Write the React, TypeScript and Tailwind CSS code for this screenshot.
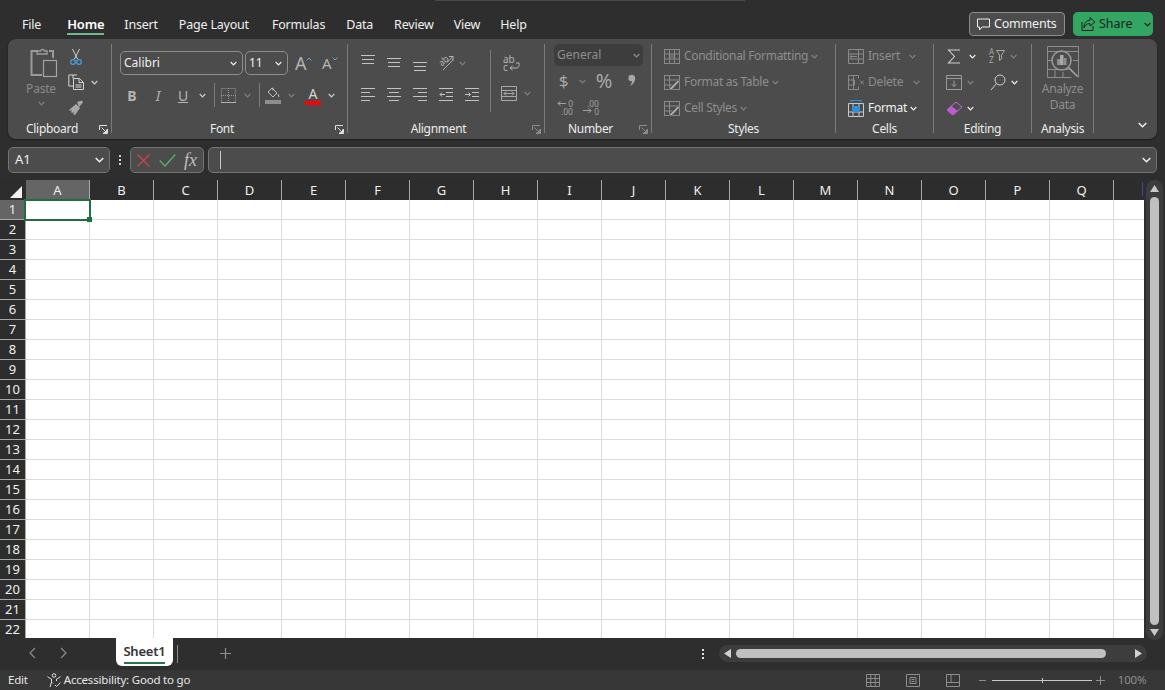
import type { ReactNode } from "react";

const DIM = "#8f8f8f";
const LITE = "#d0d0d0";

const tabs = [
  { name: "File", cls: "ml-[22px]" },
  { name: "Home", cls: "ml-[26px] text-[13px] font-semibold text-white" },
  { name: "Insert", cls: "ml-[20px]" },
  { name: "Page Layout", cls: "ml-[21px]" },
  { name: "Formulas", cls: "ml-[23px]" },
  { name: "Data", cls: "ml-[21px]" },
  { name: "Review", cls: "ml-[21px]" },
  { name: "View", cls: "ml-[20px]" },
  { name: "Help", cls: "ml-[20px]" },
];

const columns = ["A", "B", "C", "D", "E", "F", "G", "H", "I", "J", "K", "L", "M", "N", "O", "P", "Q"];
const rows = Array.from({ length: 22 }, (_, i) => i + 1);

function Chev({ color = LITE, className = "" }: { color?: string; className?: string }) {
  return (
    <svg width="7" height="5" viewBox="0 0 7 5" className={`shrink-0 ${className}`}>
      <path d="M.7 1 3.500 3.800 6.300 1" fill="none" stroke={color} strokeWidth="1.200" />
    </svg>
  );
}

function Launcher({ dim }: { dim?: boolean }) {
  const c = dim ? "#8c8c8c" : "#e0e0e0";
  return (
    <div className="w-[15px] flex items-center justify-center">
      <svg width="9" height="9" viewBox="0 0 9 9">
        <path d="M.5 5V.5h7.500M8.500 4v4.500H4M2.500 2.500l5 5M4.500 7.500h3v-3" fill="none" stroke={c} strokeWidth="1" />
      </svg>
    </div>
  );
}

function Group({ w, label, launcher, children }: { w: string; label: string; launcher?: "on" | "dim"; children: ReactNode }) {
  return (
    <div className={`${w} h-[89px] my-[5px] border-r border-[#7a7a7a] flex flex-col shrink-0`}>
      <div className="h-[77px] shrink-0">{children}</div>
      <div className="h-[16px] shrink-0 flex text-[12px] leading-[16px] tracking-[-0.3px] text-[#ececec]">
        <div className="flex-1 text-center">{label}</div>
        {launcher && <Launcher dim={launcher === "dim"} />}
      </div>
    </div>
  );
}

function Row3({ children }: { children: ReactNode }) {
  return <div className="h-[26px] flex items-center">{children}</div>;
}

function Lines({ pos, dim }: { pos: "top" | "mid" | "bot"; dim?: boolean }) {
  const y = pos === "top" ? [0.5, 4.5, 8.5] : pos === "mid" ? [3.5, 7.5, 11.5] : [7.5, 11.5, 15.5];
  const x = [[0, 14], [1, 13], [1, 13]];
  return (
    <svg width="14" height="16" viewBox="0 0 14 16" className="shrink-0">
      {y.map((v, i) => (
        <path key={i} d={`M${x[i][0]} ${v}H${x[i][1]}`} stroke={dim ? DIM : "#c4c4c4"} />
      ))}
    </svg>
  );
}

function Para({ kind }: { kind: "l" | "c" | "r" | "out" | "in" }) {
  const s = "#c4c4c4";
  return (
    <svg width="14" height="13" viewBox="0 0 14 13" className="shrink-0">
      {kind === "l" && <path d="M0 .5h14M0 4.500h9M0 8.500h14M0 12.500h9" stroke={s} />}
      {kind === "c" && <path d="M0 .5h14M2 4.500h10M0 8.500h14M2 12.500h10" stroke={s} />}
      {kind === "r" && <path d="M0 .5h14M5 4.500h9M0 8.500h14M5 12.500h9" stroke={s} />}
      {kind === "out" && <path d="M0 .5h14M7 4.500h7M7 8.500h7M0 12.500h14M6 6.500H1M3 4.500l-2 2 2 2" stroke={s} fill="none" />}
      {kind === "in" && <path d="M0 .5h14M7 4.500h7M7 8.500h7M0 12.500h14M0 6.500h5M3.500 4.500l2 2-2 2" stroke={s} fill="none" />}
    </svg>
  );
}

function TableIcon() {
  const c = "#8a8a8a";
  return (
    <svg width="16" height="15" viewBox="0 0 16 15" className="shrink-0">
      <rect x=".5" y=".5" width="15" height="14" fill="none" stroke={c} />
      <path d="M.5 5h15M.5 10h15M5.500 0v15M10.500 0v15" stroke={c} />
      <rect x="6" y="5.500" width="4" height="4" fill="#6a6a6a" />
    </svg>
  );
}

function BrushTable() {
  return (
    <svg width="16" height="15" viewBox="0 0 16 15" className="shrink-0">
      <rect x=".5" y=".5" width="15" height="14" fill="none" stroke="#8a8a8a" />
      <path d="M.5 5h15M.5 10h8M5.500 0v15" stroke="#8a8a8a" />
      <path d="M5 14l9-9 1.500 1.500-8 8.500z" fill="#b0b0b0" stroke="#4c4c4c" strokeWidth=".6" />
    </svg>
  );
}

function ClipboardGroup() {
  return (
    <Group w="w-[104px]" label="Clipboard" launcher="on">
      <div className="flex -mt-px">
        <div className="ml-[14px] w-[38px] flex flex-col items-center pt-[5px]">
          <svg width="28" height="30" viewBox="0 0 28 30" className="ml-[5px]">
            <path d="M8 3H1.500v24H12M19 3h4v7" fill="none" stroke="#9a9a9a" strokeWidth="2" />
            <path d="M7 5V3h3.500C11 1 14 1 14.500 3H17v3H7z" fill="none" stroke="#9a9a9a" strokeWidth="1.400" />
            <rect x="13.500" y="12.500" width="13" height="16" fill="none" stroke="#a4a4a4" strokeWidth="1.200" />
          </svg>
          <div className="mt-[3px] text-[12px] leading-[16px] tracking-[-0.2px] text-[#8a8a8a]">Paste</div>
          <Chev color="#808080" className="mt-[4px]" />
        </div>
        <div className="ml-[8px] flex flex-col">
          <Row3>
            <svg width="16" height="17" viewBox="0 0 16 17" className="shrink-0">
              <path d="M4.500 1l5 10M11.500 1l-5 10" stroke="#d0d0d0" fill="none" />
              <circle cx="5" cy="14" r="2.300" fill="none" stroke="#4a9fe0" strokeWidth="1.200" />
              <circle cx="11" cy="14" r="2.300" fill="none" stroke="#4a9fe0" strokeWidth="1.200" />
            </svg>
          </Row3>
          <Row3>
            <svg width="16" height="16" viewBox="0 0 16 16" className="shrink-0">
              <path d="M5 1H.8v11H5M5 4.500V1h4" fill="none" stroke="#d4d4d4" />
              <path d="M5.500 4.500h6l4 4v7h-10zM11 4.500v4h4.500M7.500 11h6M7.500 13h6" fill="#4c4c4c" stroke="#d4d4d4" />
            </svg>
            <Chev className="ml-[7px]" />
          </Row3>
          <Row3>
            <svg width="16" height="16" viewBox="0 0 16 16" className="shrink-0">
              <path d="M9 2l5-1.500 1 2L11 7zM1 10l7-6 4 4-5 7-2-1 1-2-2 1-1-1 1-2-2 1z" fill="#a8a8a8" />
            </svg>
          </Row3>
        </div>
      </div>
    </Group>
  );
}

function Combo({ w, text }: { w: string; text: string }) {
  return (
    <div className={`${w} h-[24px] rounded-[5px] border border-[#8e8e8e] flex items-center justify-between pl-[3px] pr-[5px] text-[12px] text-[#f0f0f0]`}>
      <span>{text}</span>
      <Chev color="#f0f0f0" />
    </div>
  );
}

function FontGroup() {
  return (
    <Group w="w-[236px]" label="Font" launcher="on">
      <div className="flex items-center mt-[7px] ml-[8px]">
        <Combo w="w-[123px]" text="Calibri" />
        <div className="ml-[2px]"><Combo w="w-[43px]" text="11" /></div>
        <div className="ml-[7px] w-[17px] h-[24px] flex items-start">
          <span className="text-[18px] leading-[24px] text-[#b4b4b4]">A</span>
          <svg width="6" height="4" viewBox="0 0 6 4" className="mt-[6px] -ml-[1px] shrink-0"><path d="M.5 3.500 3 1l2.500 2.500" fill="none" stroke="#5aa9e6" /></svg>
        </div>
        <div className="ml-[10px] w-[17px] h-[24px] flex items-start">
          <span className="text-[15px] leading-[24px] text-[#b4b4b4]">A</span>
          <svg width="6" height="4" viewBox="0 0 6 4" className="mt-[6px] shrink-0"><path d="M.5.500 3 3 5.500.5" fill="none" stroke="#5aa9e6" /></svg>
        </div>
      </div>
      <div className="flex items-center h-[24px] mt-[8px]">
        <span className="ml-[14px] w-[12px] text-center text-[14px] font-bold text-[#b4b4b4]">B</span>
        <span className="ml-[14px] w-[12px] text-center text-[14px] italic text-[#b4b4b4]">I</span>
        <span className="ml-[13px] w-[12px] text-center text-[14px] underline text-[#b4b4b4]">U</span>
        <Chev className="ml-[10px]" />
        <div className="ml-[8px] w-px h-[24px] bg-[#7a7a7a]" />
        <svg width="15" height="15" viewBox="0 0 15 15" className="ml-[6px] shrink-0">
          <path d="M.5.500h14v14H.5zM7.500 0v15M0 7.500h15" fill="none" stroke="#9a9a9a" strokeDasharray="1 1" />
          <path d="M0 14.500h15" stroke="#b0b0b0" />
        </svg>
        <Chev color="#808080" className="ml-[8px]" />
        <div className="ml-[8px] w-px h-[24px] bg-[#7a7a7a]" />
        <svg width="16" height="17" viewBox="0 0 16 17" className="ml-[5px] shrink-0">
          <path d="M7 1l5 5-4 4-5-5zM8 .5v3M13 7l1 3" fill="none" stroke="#c0c0c0" />
          <rect x="0" y="13" width="16" height="4" fill="#8e8e8e" />
        </svg>
        <Chev color="#808080" className="ml-[7px]" />
        <div className="ml-[10px] w-[16px] flex flex-col items-center">
          <span className="text-[14px] leading-[15px] text-[#d4d4d4]">A</span>
          <div className="w-[16px] h-[4px] bg-[#ff0000]" />
        </div>
        <Chev className="ml-[7px]" />
      </div>
    </Group>
  );
}

function AlignmentGroup() {
  return (
    <Group w="w-[197px]" label="Alignment" launcher="dim">
      <div className="flex">
        <div className="w-[142px] pt-[11px]">
          <div className="flex items-center h-[16px]">
            <div className="ml-[13px]"><Lines pos="top" /></div>
            <div className="ml-[12px]"><Lines pos="mid" /></div>
            <div className="ml-[12px]"><Lines pos="bot" /></div>
            <div className="ml-[11px] w-[16px] h-[16px] relative shrink-0">
              <span className="absolute left-0 top-0 -rotate-45 text-[9px] leading-[11px] text-[#b4b4b4]">ab</span>
              <svg width="16" height="16" viewBox="0 0 16 16" className="absolute left-0 top-0">
                <path d="M5 15 15 5M11 1.500h4v4M15 1.500 9 7.500" fill="none" stroke="#b4b4b4" />
              </svg>
            </div>
            <Chev color="#808080" className="ml-[5px]" />
          </div>
          <div className="flex items-center mt-[17px]">
            <div className="ml-[13px]"><Para kind="l" /></div>
            <div className="ml-[12px]"><Para kind="c" /></div>
            <div className="ml-[12px]"><Para kind="r" /></div>
            <div className="ml-[12px]"><Para kind="out" /></div>
            <div className="ml-[12px]"><Para kind="in" /></div>
          </div>
        </div>
        <div className="mt-[6px] w-px h-[62px] bg-[#7a7a7a]" />
        <div className="flex flex-col pt-[11px]">
          <div className="ml-[12px] w-[17px] h-[16px] relative text-[10px] leading-[8px] text-[#b4b4b4] whitespace-pre-line">
            {"ab\nc"}
            <svg width="17" height="16" viewBox="0 0 17 16" className="absolute left-0 top-0">
              <path d="M13 8h3c.5 4-1 5-2 5H7M9.500 11 7 13l2.500 2" fill="none" stroke="#b4b4b4" />
            </svg>
          </div>
          <div className="flex items-center mt-[15px] ml-[10px]">
            <svg width="16" height="15" viewBox="0 0 16 15" className="shrink-0">
              <path d="M.5.500h15v14H.5zM.5 4.500h15M.5 10.500h15M3 7.500h10M5 5.500l-2 2 2 2M11 5.500l2 2-2 2" fill="none" stroke="#a8a8a8" />
            </svg>
            <Chev color="#808080" className="ml-[7px]" />
          </div>
        </div>
      </div>
    </Group>
  );
}

function NumberGroup() {
  const tiny = "text-[8.500px] leading-[8px] text-[#a0a0a0] text-right whitespace-pre-line";
  return (
    <Group w="w-[107px]" label="Number" launcher="dim">
      <div className="ml-[9px] w-[89px] h-[22px] bg-[#3d3d3d] rounded-[5px] flex items-center justify-between pl-[3px] pr-[3px] text-[12px] text-[#8e8e8e]">
        <span>General</span>
        <Chev color="#8e8e8e" />
      </div>
      <div className="flex items-center h-[24px] mt-[3px]">
        <span className="ml-[13px] w-[11px] text-center text-[17px] leading-[24px] text-[#a8a8a8]">$</span>
        <Chev color="#808080" className="ml-[10px]" />
        <span className="ml-[8px] w-[20px] text-center text-[20px] leading-[24px] text-[#a8a8a8]">%</span>
        <svg width="8" height="14" viewBox="0 0 8 14" className="ml-[14px] shrink-0">
          <path d="M1.500 1.500C5-.5 8 2 7 6c-.5 3-3 5-5 6 1-2 2-3 2-5-2 .5-4-.5-3.500-3 .1-1 .3-2 .5-2.500z" fill="#a8a8a8" />
        </svg>
      </div>
      <div className="flex items-center mt-[7px]">
        <div className={`ml-[12px] w-[16px] h-[14px] relative shrink-0 ${tiny}`}>
          {"0\n.00"}
          <svg width="9" height="7" viewBox="0 0 9 7" className="absolute left-0 top-0">
            <path d="M9 3.500H1M3.500 1 1 3.500 3.500 6" fill="none" stroke="#a0a0a0" />
          </svg>
        </div>
        <div className={`ml-[10px] w-[16px] h-[14px] relative shrink-0 ${tiny}`}>
          {".00\n0"}
          <svg width="9" height="7" viewBox="0 0 9 7" className="absolute left-0 top-[7px]">
            <path d="M0 3.500h8M5.500 1 8 3.500 5.500 6" fill="none" stroke="#a0a0a0" />
          </svg>
        </div>
      </div>
    </Group>
  );
}

function StyleRow({ icon, text }: { icon: ReactNode; text: string }) {
  return (
    <Row3>
      <div className="ml-[12px] flex items-center">{icon}</div>
      <span className="ml-[4px] text-[12px] text-[#8e8e8e] tracking-[-0.3px]">{text}</span>
      <Chev color="#808080" className="ml-[3px]" />
    </Row3>
  );
}

function CellsGroup() {
  return (
    <Group w="w-[98px]" label="Cells">
      <div className="-mt-px">
        <Row3>
          <svg width="16" height="15" viewBox="0 0 16 15" className="ml-[12px] shrink-0">
            <path d="M.5.500h15v14H.5zM.5 5h15M.5 10h15M10.500 0v15M9 7.500H2M4 5.500l-2 2 2 2" fill="none" stroke="#8a8a8a" />
          </svg>
          <span className="ml-[4px] w-[38px] text-[12px] tracking-[-0.2px] text-[#8e8e8e]">Insert</span>
          <Chev color="#808080" className="ml-[3px]" />
        </Row3>
        <Row3>
          <svg width="16" height="15" viewBox="0 0 16 15" className="ml-[12px] shrink-0">
            <path d="M.5.500h10v3M.5.500v14h10v-3M.5 5h6v5h-6M5.500 0v15M12 5.500l4 4M16 5.500l-4 4" fill="none" stroke="#8a8a8a" />
          </svg>
          <span className="ml-[4px] w-[42px] text-[12px] tracking-[-0.2px] text-[#8e8e8e]">Delete</span>
          <Chev color="#808080" className="ml-[3px]" />
        </Row3>
        <Row3>
          <svg width="16" height="17" viewBox="0 0 16 17" className="ml-[12px] shrink-0">
            <path d="M.5 3.500h15v13H.5zM.5 12h15M5 3.500v13M11 3.500v13" fill="none" stroke="#c8c8c8" />
            <rect x="4" y="6" width="8" height="6" fill="#2f8fdb" />
            <path d="M3 .500h10M3 0v2M13 0v2" stroke="#2f8fdb" fill="none" />
          </svg>
          <span className="ml-[4px] text-[12px] tracking-[-0.3px] text-[#f0f0f0]">Format</span>
          <Chev color="#f0f0f0" className="ml-[3px]" />
        </Row3>
      </div>
    </Group>
  );
}

function EditingGroup() {
  return (
    <Group w="w-[98px]" label="Editing">
      <div className="-mt-px">
        <Row3>
          <svg width="14" height="15" viewBox="0 0 14 15" className="ml-[13px] shrink-0">
            <path d="M13 1H1.500l6 6.500-6 6.500H13" fill="none" stroke="#d0d0d0" strokeWidth="1.100" />
          </svg>
          <Chev color="#f0f0f0" className="ml-[8px]" />
          <div className="ml-[13px] w-[16px] h-[16px] flex shrink-0">
            <div className="w-[7px] text-[8px] leading-[8px] text-[#a8a8a8] whitespace-pre-line">{"A\nZ"}</div>
            <svg width="9" height="11" viewBox="0 0 9 11" className="mt-[2px]">
              <path d="M.5.500h8L5.500 5v4L3.500 10.500V5z" fill="none" stroke="#a8a8a8" />
            </svg>
          </div>
          <Chev color="#808080" className="ml-[5px]" />
        </Row3>
        <Row3>
          <svg width="16" height="15" viewBox="0 0 16 15" className="ml-[12px] shrink-0">
            <path d="M.5.500h15v14H.5zM.5 3.500h15M8 5.500v6M5.500 9 8 11.500 10.500 9" fill="none" stroke="#9a9a9a" />
          </svg>
          <Chev color="#808080" className="ml-[5px]" />
          <svg width="16" height="17" viewBox="0 0 16 17" className="ml-[16px] shrink-0">
            <circle cx="10" cy="6" r="5" fill="none" stroke="#d0d0d0" />
            <path d="M6.500 9.500 1 16" stroke="#d0d0d0" />
          </svg>
          <Chev color="#f0f0f0" className="ml-[5px]" />
        </Row3>
        <Row3>
          <svg width="17" height="15" viewBox="0 0 17 15" className="ml-[12px] shrink-0">
            <path d="M1 9 10 1l6 5-9 8z" fill="#4c4c4c" stroke="#c76ad6" />
            <path d="M1 9l4-4 6 5-4 4z" fill="#c05ad0" stroke="#c05ad0" />
          </svg>
          <Chev color="#f0f0f0" className="ml-[4px]" />
        </Row3>
      </div>
    </Group>
  );
}

function AnalysisGroup() {
  return (
    <Group w="w-[62px]" label="Analysis">
      <div className="flex flex-col items-center pt-[2px]">
        <svg width="32" height="32" viewBox="0 0 32 32">
          <path d="M.5.500h31v31M.5.500v31h24M.5 5.500h31M.5 23.500h21M.5 14.500h6M26 14.500h5M8 24v7M16 26v5" fill="none" stroke="#8e8e8e" />
          <circle cx="14.500" cy="14.500" r="9.500" fill="#4c4c4c" stroke="#9a9a9a" strokeWidth="1.500" />
          <rect x="10" y="13" width="3" height="6" fill="#8e8e8e" />
          <rect x="13" y="9" width="3.500" height="10" fill="#a8a8a8" />
          <rect x="16.500" y="12" width="3" height="7" fill="#8e8e8e" />
          <path d="M21.500 21.500l9 9" stroke="#a8a8a8" strokeWidth="1.600" />
        </svg>
        <div className="mt-[3px] text-[12px] leading-[16px] tracking-[-0.3px] text-[#8e8e8e] text-center">Analyze<br />Data</div>
      </div>
    </Group>
  );
}

function Ribbon() {
  return (
    <div className="mx-2 h-[100px] shrink-0 bg-[#4c4c4c] rounded-lg flex shadow-[0_1px_2px_rgba(0,0,0,0.4)]">
      <ClipboardGroup />
      <FontGroup />
      <AlignmentGroup />
      <NumberGroup />
      <Group w="w-[184px]" label="Styles">
        <div className="-mt-px">
          <StyleRow icon={<TableIcon />} text="Conditional Formatting" />
          <StyleRow icon={<BrushTable />} text="Format as Table" />
          <StyleRow icon={<BrushTable />} text="Cell Styles" />
        </div>
      </Group>
      <CellsGroup />
      <EditingGroup />
      <AnalysisGroup />
      <div className="flex-1 flex justify-end items-end pb-[11px] pr-[10px]">
        <svg width="9" height="6" viewBox="0 0 9 6"><path d="M.7 1 4.500 4.800 8.300 1" fill="none" stroke="#f0f0f0" strokeWidth="1.500" /></svg>
      </div>
    </div>
  );
}

function FormulaRow() {
  return (
    <div className="flex items-center h-[26px] shrink-0 mt-[8px] ml-2 mr-2">
      <div className="w-[102px] h-[26px] bg-[#4c4c4c] border border-[#747474] rounded-[5px] flex items-center justify-between pl-[6px] pr-[5px] text-[13px] text-[#f0f0f0]">
        <span>A1</span>
        <svg width="9" height="6" viewBox="0 0 9 6"><path d="M.7 1 4.500 4.800 8.300 1" fill="none" stroke="#f0f0f0" strokeWidth="1.500" /></svg>
      </div>
      <div className="w-[20px] flex flex-col items-center gap-[2px]">
        <div className="w-[2px] h-[2px] bg-[#d0d0d0]" />
        <div className="w-[2px] h-[2px] bg-[#d0d0d0]" />
        <div className="w-[2px] h-[2px] bg-[#d0d0d0]" />
      </div>
      <div className="w-[74px] h-[26px] bg-[#4c4c4c] border border-[#747474] rounded-[5px] flex items-center">
        <svg width="13" height="13" viewBox="0 0 13 13" className="ml-[6px]"><path d="M.5.500l12 12M12.500.500l-12 12" stroke="#d9434e" strokeWidth="1.100" /></svg>
        <svg width="17" height="13" viewBox="0 0 17 13" className="ml-[9px]"><path d="M.7 6.500 6 12 16.300.500" fill="none" stroke="#55b56f" strokeWidth="1.200" /></svg>
        <span className="ml-[8px] text-[18px] italic text-[#c0c0c0] leading-none font-['Liberation_Serif',serif]">fx</span>
      </div>
      <div className="ml-[4px] flex-1 h-[26px] bg-[#4c4c4c] border border-[#747474] rounded-[5px] flex items-center justify-between pl-[11px] pr-[5px]">
        <div className="w-px h-[18px] bg-[#c8c8c8]" />
        <svg width="9" height="6" viewBox="0 0 9 6"><path d="M.7 1 4.500 4.800 8.300 1" fill="none" stroke="#f0f0f0" strokeWidth="1.500" /></svg>
      </div>
    </div>
  );
}

function Sheet() {
  return (
    <div className="flex h-[458px] shrink-0 mt-[7px]">
      <div className="w-[1144px] h-[458px] overflow-hidden relative">
        <div className="flex h-[20px] bg-[#2d2d2d] text-[13px] text-[#f0f0f0]">
          <div className="w-[26px] flex justify-end items-end pr-[4px] pb-[2px]">
            <svg width="12" height="12" viewBox="0 0 12 12"><path d="M12 0v12H0z" fill="#f0f0f0" /></svg>
          </div>
          {columns.map((c, i) => (
            <div key={c} className={`w-[64px] pt-px flex items-center justify-center border-r border-[#a8a8a8] ${i === 0 ? "bg-[#656565]" : ""}`}>{c}</div>
          ))}
          <div className="flex-1 flex justify-end pr-[1px]"><div className="w-px h-[14px] mt-[2px] bg-[#3b4a9c]" /></div>
        </div>
        {rows.map(r => (
          <div key={r} className="flex h-[20px]">
            <div className={`w-[26px] pt-px shrink-0 flex items-center justify-center text-[13px] text-[#f0f0f0] border-r border-b border-[#a8a8a8] ${r === 1 ? "bg-[#656565]" : "bg-[#2d2d2d]"}`}>{r}</div>
            {columns.map(c => (
              <div key={c} className="w-[64px] shrink-0 bg-white border-r border-b border-[#dcdcdc]" />
            ))}
            <div className="flex-1 bg-white border-b border-[#dcdcdc]" />
          </div>
        ))}
        {/* selected cell */}
        <div className="absolute left-[24px] top-[19px] w-[67px] h-[22px] border-2 border-[#1f6e43]" />
        <div className="absolute left-[87px] top-[37px] w-[5px] h-[5px] bg-[#1f6e43]" />
      </div>
      <div className="flex-1 relative z-10">
        <div className="ml-[2px] w-[17px] h-[460px] bg-[#3d3d3d] rounded-full flex flex-col items-center">
          <svg width="9" height="7" viewBox="0 0 9 7" className="mt-[5px]"><path d="M4.500 0 9 7H0z" fill="#c8c8c8" /></svg>
          <div className="mt-[5px] w-[9px] h-[428px] rounded-full bg-[#c0c0c0]" />
          <svg width="9" height="7" viewBox="0 0 9 7" className="mt-[4px]"><path d="M4.500 7 9 0H0z" fill="#c8c8c8" /></svg>
        </div>
      </div>
    </div>
  );
}

function SheetBar() {
  return (
    <div className="h-[32px] shrink-0 bg-[#2e2e2e] flex">
      <svg width="8" height="12" viewBox="0 0 8 12" className="ml-[28px] mt-[9px] shrink-0"><path d="M7 1 2 6l5 5" fill="none" stroke="#8c8c8c" strokeWidth="1.200" /></svg>
      <svg width="8" height="12" viewBox="0 0 8 12" className="ml-[24px] mt-[9px] shrink-0"><path d="M1 1l5 5-5 5" fill="none" stroke="#8c8c8c" strokeWidth="1.200" /></svg>
      <div className="ml-[48px] w-[57px] h-[28px] bg-white rounded-b-[6px] flex flex-col items-center text-[#333] text-[13px] tracking-[-0.2px] font-semibold leading-[20px] pt-[3px] shrink-0">
        <span>Sheet1</span>
        <div className="w-[41px] h-[2px] bg-[#1f7a45] mt-px" />
      </div>
      <div className="ml-[4px] mt-[7px] w-px h-[18px] bg-[#8c8c8c]" />
      <svg width="13" height="13" viewBox="0 0 13 13" className="ml-[41px] mt-[9px] shrink-0"><path d="M6.500 1v11M1 6.500h11" stroke="#8c8c8c" strokeWidth="1.200" /></svg>
      <div className="ml-[470px] mt-[11px] flex flex-col gap-[2px] w-[2px] shrink-0">
        <div className="w-[2px] h-[2px] bg-[#e0e0e0]" />
        <div className="w-[2px] h-[2px] bg-[#e0e0e0]" />
        <div className="w-[2px] h-[2px] bg-[#e0e0e0]" />
      </div>
      <div className="ml-[15px] mt-[7px] w-[428px] h-[17px] bg-[#3d3d3d] rounded-full flex items-center shrink-0">
        <svg width="7" height="9" viewBox="0 0 7 9" className="ml-[5px]"><path d="M0 4.500 7 0v9z" fill="#d0d0d0" /></svg>
        <div className="ml-[5px] w-[370px] h-[9px] rounded-full bg-[#c0c0c0]" />
        <svg width="7" height="9" viewBox="0 0 7 9" className="ml-[29px]"><path d="M7 4.500 0 0v9z" fill="#d0d0d0" /></svg>
      </div>
    </div>
  );
}

function StatusBar() {
  const c = "#8e8e8e";
  return (
    <div className="h-[20px] shrink-0 bg-[#373737] flex items-center text-[11.500px] text-[#e8e8e8] tracking-[-0.2px]">
      <span className="ml-[8px]">Edit</span>
      <svg width="15" height="15" viewBox="0 0 15 15" className="ml-[19px] shrink-0">
        <circle cx="7" cy="2.500" r="1.800" fill="none" stroke="#e0e0e0" />
        <path d="M.5 3.500c2 2 3.500 2 4 2.500v3L3 14M13.500 3.500c-2 2-3.500 2-4 2.500v2M5 9.500l1 1M8 12l1.500 1.500 4-4" fill="none" stroke="#e0e0e0" />
      </svg>
      <span className="ml-[2px] w-[127px] whitespace-nowrap">Accessibility: Good to go</span>
      <svg width="14" height="13" viewBox="0 0 14 13" className="ml-[675px] shrink-0">
        <path d="M.5.500h13v12H.5zM.5 4.500h13M.5 8.500h13M4.800 0v13M9.200 0v13" fill="none" stroke={c} />
      </svg>
      <svg width="14" height="13" viewBox="0 0 14 13" className="ml-[26px] shrink-0">
        <path d="M.5.500h13v12H.5zM4 3.500h6v6H4zM5.500 5.500h3M5.500 7.500h3" fill="none" stroke={c} />
      </svg>
      <svg width="14" height="13" viewBox="0 0 14 13" className="ml-[26px] shrink-0">
        <path d="M.5.500h13v12H.5zM.5 8.500h13M5 0v8.500" fill="none" stroke={c} />
      </svg>
      <div className="ml-[19px] w-[7px] h-px bg-[#8e8e8e] shrink-0" />
      <div className="ml-[6px] w-[100px] h-[7px] shrink-0 flex items-center justify-center relative">
        <div className="w-[100px] h-px bg-[#c8c8c8]" />
        <div className="absolute left-[50px] w-px h-[5px] bg-[#c8c8c8]" />
      </div>
      <svg width="9" height="9" viewBox="0 0 9 9" className="ml-[4px] shrink-0"><path d="M4.500 0v9M0 4.500h9" stroke={c} /></svg>
      <span className="ml-[13px] text-[#8e8e8e]">100%</span>
    </div>
  );
}

export default function App() {
  return (
    <div className="relative w-[1165px] h-[690px] bg-[#2e2e2e] overflow-hidden flex flex-col font-['Noto_Sans',sans-serif]">
      {/* sliver of the window behind */}
      <div className="absolute left-[435px] top-0 w-[310px] h-px bg-[#4a4a4a]" />
      {/* title row */}
      <div className="h-[39px] shrink-0 flex text-[12.500px] text-[#f0f0f0]">
        <div className="flex flex-1 pt-[14px]">
          {tabs.map(t => (
            <div key={t.name} className={`${t.cls} h-[21px] leading-[21px] tracking-[-0.2px] border-b-2 ${t.name === "Home" ? "border-[#6dbb8e]" : "border-transparent"}`}>{t.name}</div>
          ))}
        </div>
        <div className="flex items-start pt-[12px] pr-[12px]">
          <div className="w-[96px] h-[24px] bg-[#4c4c4c] border border-[#8c8c8c] rounded-[4px] flex items-center pl-[7px]">
            <svg width="13" height="13" viewBox="0 0 13 13" className="shrink-0"><path d="M.5 1h12v8H5l-2.500 3V9H.5z" fill="none" stroke="#f0f0f0" /></svg>
            <span className="ml-[4px] tracking-[-0.2px]">Comments</span>
          </div>
          <div className="ml-[8px] w-[80px] h-[24px] bg-[#33a664] rounded-[5px] flex items-center pl-[8px] text-[#1d1d1d]">
            <svg width="15" height="14" viewBox="0 0 15 14" className="shrink-0"><path d="M9 .5 14 5 9 9V6.500C6 6.500 4 8 3 11 3 6 5 3.500 9 3.500zM1 5v8.500h11V9" fill="none" stroke="#1d1d1d" /></svg>
            <span className="ml-[3px]">Share</span>
            <Chev color="#1d1d1d" className="ml-[11px]" />
          </div>
        </div>
      </div>
      <Ribbon />
      <FormulaRow />
      <Sheet />
      <SheetBar />
      <StatusBar />
    </div>
  );
}
